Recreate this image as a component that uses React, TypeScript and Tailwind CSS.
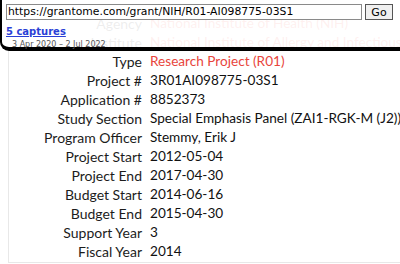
const rows: { label: string; value: string; red?: boolean }[] = [
  { label: "Agency", value: "National Institute of Health (NIH)", red: true },
  { label: "Institute", value: "National Institute of Allergy and Infectious Diseases (NIAID)", red: true },
  { label: "Type", value: "Research Project (R01)", red: true },
  { label: "Project #", value: "3R01AI098775-03S1" },
  { label: "Application #", value: "8852373" },
  { label: "Study Section", value: "Special Emphasis Panel (ZAI1-RGK-M (J2))" },
  { label: "Program Officer", value: "Stemmy, Erik J" },
  { label: "Project Start", value: "2012-05-04" },
  { label: "Project End", value: "2017-04-30" },
  { label: "Budget Start", value: "2014-06-16" },
  { label: "Budget End", value: "2015-04-30" },
  { label: "Support Year", value: "3" },
  { label: "Fiscal Year", value: "2014" },
];

export default function App() {
  return (
    <div className="relative h-[264px] w-[400px] overflow-hidden bg-white font-['Lato',sans-serif]">
      {/* grant details */}
      <div className="ml-2 h-[263px] border-b border-l border-[#e8e8e8] pt-[14px]">
        <div className="grid grid-cols-[133px_1fr] gap-x-2 leading-[19px]">
          {rows.map((r) => (
            <div key={r.label} className="contents">
              <div className="whitespace-nowrap text-right text-[14px] text-[#1c1c1c]">{r.label}</div>
              <div
                className={
                  "whitespace-nowrap text-[13.6px] " + (r.red ? "text-[#e8453c]" : "text-[#111]")
                }
              >
                {r.value}
              </div>
            </div>
          ))}
        </div>
      </div>

      {/* wayback toolbar */}
      <div className="absolute left-0 right-0 top-0 h-[51px] rounded-bl-[9px] border-b-4 border-l-2 border-black bg-white/[0.92] font-['DejaVu_Sans',sans-serif]">
        <div className="flex items-center gap-[3px] pl-[4px] pt-[4px]">
          <div className="h-[16px] w-[356px] border border-[#8a8a8a] bg-white pl-[1px] text-[10.8px] leading-[14px] text-black">
            https://grantome.com/grant/NIH/R01-AI098775-03S1
          </div>
          <button className="h-[16px] w-[28px] border border-[#555] bg-[#f0f0f0] text-[11px] leading-[13px] text-black">
            Go
          </button>
        </div>
        <a className="ml-[4px] mt-[6px] block text-[10px] font-bold leading-[12px] text-[#2a3fd6] underline">
          5 captures
        </a>
        <div className="ml-[10px] mt-[2px] text-[8px] leading-[10px] text-[#555]">
          3 Apr 2020 – 2 Jul 2022
        </div>
      </div>
    </div>
  );
}
